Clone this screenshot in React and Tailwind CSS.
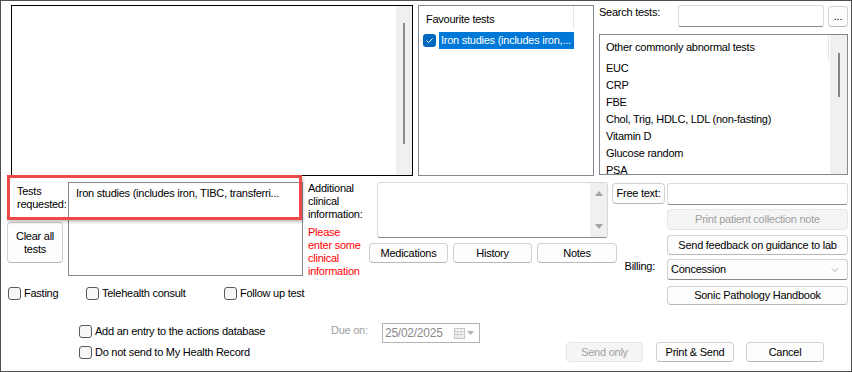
import React from 'react';
import { ChevronDown } from 'lucide-react';

const Btn = ({ children, className = '', disabled = false }) => (
  <div
    className={`flex items-center justify-center rounded-[4px] border leading-[13px] text-center ${
      disabled
        ? 'border-[#e5e5e5] bg-[#f5f5f5] text-[#a0a0a0]'
        : 'border-[#d0d0d0] border-b-[#b8b8b8] bg-[#fdfdfd] text-black'
    } ${className}`}
  >
    {children}
  </div>
);

const Check = ({ label, className = '' }) => (
  <div className={`flex items-center ${className}`}>
    <div className="h-[13px] w-[13px] shrink-0 rounded-[3px] border border-[#5a5a5a] bg-[#f7f7f7]" />
    <span className="ml-[3px] leading-[13px]">{label}</span>
  </div>
);

const Field = ({ className = '' }) => (
  <div className={`rounded-[3px] border border-[#dadada] border-b-[#8a8a8a] bg-white ${className}`} />
);

const otherTests = [
  'EUC',
  'CRP',
  'FBE',
  'Chol, Trig, HDLC, LDL (non-fasting)',
  'Vitamin D',
  'Glucose random',
  'PSA',
];

export default function App() {
  return (
    <div className="relative h-[372px] w-[852px] overflow-hidden border border-[#4f4f4f] bg-white font-['Liberation_Sans',Arial,sans-serif] text-[11px] tracking-[-0.25px] text-black">
      {/* top row */}
      <div className="flex pl-[10px] pt-[4px]">
        <div className="flex h-[171px] w-[402px] border border-black">
          <div className="flex-1" />
          <div className="w-[16px] bg-[#f0f0f0]">
            <div className="ml-[7px] mt-[17px] h-[121px] w-[2px] bg-[#8a8a8a]" />
          </div>
        </div>

        <div className="ml-[5px] h-[171px] w-[176px] border border-[#828790]">
          <div className="h-[22px] w-[155px] border-r border-[#e5e5e5] pl-[7px] pt-[6px] leading-[15px]">
            Favourite tests
          </div>
          <div className="mt-[3px] flex h-[18px] items-center pl-[4px]">
            <div className="flex h-[13px] w-[13px] items-center justify-center rounded-[3px] bg-[#0067c0]">
              <svg width="9" height="9" viewBox="0 0 9 9" fill="none">
                <path d="M1.5 4.6 L3.6 6.6 L7.6 2.4" stroke="white" strokeWidth="1" />
              </svg>
            </div>
            <div className="ml-[3px] h-[17px] w-[135px] bg-[#0078d7] pl-[2px] leading-[17px] text-white">
              Iron studies (includes iron,...
            </div>
          </div>
        </div>

        <div className="ml-[5px] w-[249px]">
          <div className="flex h-[23px] items-start">
            <div className="w-[79px] leading-[14px]">Search tests:</div>
            <Field className="h-[22px] w-[146px]" />
            <Btn className="ml-[4px] mt-[1px] h-[21px] w-[20px]">...</Btn>
          </div>
          <div className="mt-[6px] flex h-[141px] w-[249px] overflow-hidden border border-[#828790]">
            <div className="flex-1">
              <div className="h-[25px] w-[229px] border-r border-[#e5e5e5] pl-[6px] pt-[5px] leading-[15px]">
                Other commonly abnormal tests
              </div>
              {otherTests.map((t) => (
                <div key={t} className="h-[17px] pl-[6px] leading-[17px]">
                  {t}
                </div>
              ))}
            </div>
            <div className="w-[17px] bg-[#f0f0f0]">
              <div className="ml-[8px] mt-[18px] h-[44px] w-[2px] bg-[#868686]" />
            </div>
          </div>
        </div>
      </div>

      {/* middle row */}
      <div className="mt-[6px] flex items-start pl-[6px]">
        <div className="flex flex-col">
          <div className="flex h-[96px]">
            <div className="flex w-[56px] flex-col">
              <div className="pl-[10px] pt-[3px] leading-[13px]">
                Tests
                <br />
                requested:
              </div>
              <Btn className="mt-[11px] h-[41px] w-[56px]">
                Clear all
                <br />
                tests
              </Btn>
            </div>
            <div className="ml-[5px] h-[94px] w-[235px] border border-[#828790] px-[7px] pt-[3px] leading-[15px]">
              Iron studies (includes iron, TIBC, transferri...
            </div>
            <div className="ml-[5px] w-[61px] leading-[13px]">
              <div>
                Additional
                <br />
                clinical
                <br />
                information:
              </div>
              <div className="mt-[5px] text-[#ff0000]">
                Please
                <br />
                enter some
                <br />
                clinical
                <br />
                information
              </div>
            </div>
          </div>
          <div className="mt-[9px] flex pl-[1px]">
            <Check label="Fasting" className="w-[78px]" />
            <Check label="Telehealth consult" className="w-[138px]" />
            <Check label="Follow up test" />
          </div>
        </div>

        <div className="flex flex-col">
          <div className="flex items-start">
            <div className="ml-[8px] flex h-[56px] w-[231px] rounded-[3px] border border-[#dadada] border-b-[#8a8a8a]">
              <div className="flex-1" />
              <div className="flex w-[17px] flex-col items-center justify-between bg-[#f0f0f0] py-[8px]">
                <svg width="8" height="5" viewBox="0 0 8 5">
                  <polygon points="0,5 8,5 4,0" fill="#a3a3a3" />
                </svg>
                <svg width="8" height="5" viewBox="0 0 8 5">
                  <polygon points="0,0 8,0 4,5" fill="#a3a3a3" />
                </svg>
              </div>
            </div>
            <Btn className="ml-[4px] mt-[1px] h-[21px] w-[53px]">Free text:</Btn>
          </div>
          <div className="mt-[5px] flex items-start gap-[5px]">
            <Btn className="h-[20px] w-[79px]">Medications</Btn>
            <Btn className="h-[20px] w-[79px]">History</Btn>
            <Btn className="h-[20px] w-[80px]">Notes</Btn>
            <div className="ml-auto mr-[10px] mt-[17px] leading-[13px]">Billing:</div>
          </div>
        </div>

        <div className="ml-[2px] flex w-[181px] flex-col">
          <Field className="mt-[1px] h-[22px] w-full" />
          <Btn disabled className="mt-[4px] h-[21px] w-full">
            Print patient collection note
          </Btn>
          <Btn className="mt-[5px] h-[20px] w-full">Send feedback on guidance to lab</Btn>
          <div className="mt-[4px] flex h-[21px] items-center justify-between rounded-[3px] border border-[#d0d0d0] border-b-[#8a8a8a] bg-[#fdfdfd] pl-[3px] pr-[6px]">
            <span>Concession</span>
            <ChevronDown size={12} strokeWidth={1} color="#5a5a5a" />
          </div>
          <Btn className="mt-[6px] h-[19px] w-full">Sonic Pathology Handbook</Btn>
        </div>
      </div>

      {/* bottom row */}
      <div className="mt-[18px] flex items-start pl-[78px]">
        <div className="w-[252px]">
          <Check label="Add an entry to the actions database" className="mt-[2px]" />
          <Check label="Do not send to My Health Record" className="mt-[8px]" />
        </div>
        <div className="w-[51px] pt-[1px] leading-[13px] text-[#a0a0a0]">Due on:</div>
        <div className="flex h-[20px] w-[98px] items-center border border-[#b4b4b4] pl-[2px] pr-[5px] text-[#8a8a8a]">
          <span className="flex-1 text-[12px]">25/02/2025</span>
          <svg width="11" height="11" viewBox="0 0 11 11">
            <rect x="0.5" y="0.5" width="10" height="10" fill="#f4f4f4" stroke="#c4c4c4" />
            <path d="M0.5 3.5 H10.5 M0.5 6.5 H10.5 M3.5 3.5 V10.5 M7 3.5 V10.5" stroke="#cfcfcf" />
          </svg>
          <svg className="ml-[2px]" width="7" height="4" viewBox="0 0 7 4">
            <polygon points="0,0 7,0 3.5,4" fill="#b0b0b0" />
          </svg>
        </div>
        <div className="ml-[86px] mt-[19px] flex">
          <Btn disabled className="h-[20px] w-[77px]">Send only</Btn>
          <Btn className="ml-[13px] h-[20px] w-[78px]">Print &amp; Send</Btn>
          <Btn className="ml-[12px] h-[20px] w-[78px]">Cancel</Btn>
        </div>
      </div>

      {/* highlight annotation */}
      <div className="absolute left-[6px] top-[174px] h-[45px] w-[295px] border-[3px] border-[#ef4848] shadow-[1px_2px_3px_rgba(0,0,0,0.25)]" />
    </div>
  );
}
